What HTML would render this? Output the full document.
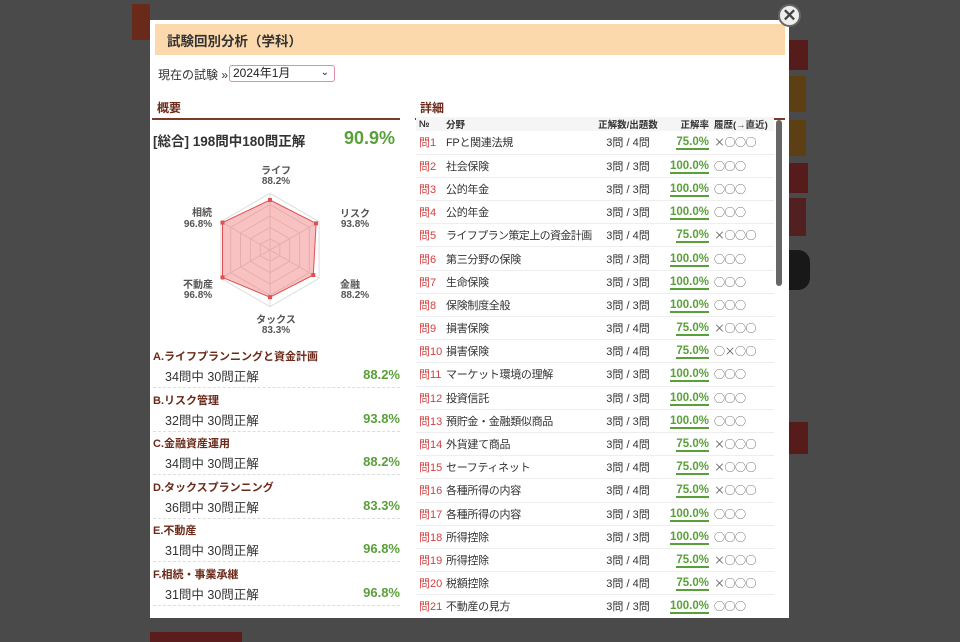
<!DOCTYPE html>
<html><head><meta charset="utf-8"><style>
*{margin:0;padding:0;box-sizing:border-box}
body{width:960px;height:640px;background:#4a4a4a;position:relative;overflow:hidden;font-family:"Liberation Sans","Noto Sans CJK JP",sans-serif;color:#333}
.b{position:absolute}
.modal{position:absolute;left:150px;top:20px;width:639px;height:598px;background:#fff}
.hdr{position:absolute;left:5px;top:4px;width:630px;height:31px;background:#fcd9ac;font-size:13.5px;font-weight:bold;color:#333;padding:6px 0 0 12px}
.sel{position:absolute;left:79px;top:45px;width:106px;height:17px;border:1.5px solid #e08aae;border-radius:3px;font-size:12px;line-height:14px;padding:0 0 0 3px;color:#222}
.h2{position:absolute;font-size:12px;font-weight:bold;color:#6b2a1a;border-bottom:2px solid #7a3a2a;padding:0 0 2px 5px}
table{border-collapse:collapse;font-size:11px;table-layout:fixed}
td{height:23.2px;border-bottom:1px solid #eee;white-space:nowrap;overflow:visible}
tr.hd td{height:14px;font-size:9.5px;font-weight:bold;background:#f5f5f5;border-bottom:none}
.n{color:#d04040;padding-left:3px}
.f{letter-spacing:-0.3px}
.c{text-align:center}
.r{text-align:right;color:#5aa03a;font-weight:bold;font-size:11.5px}
.r span{border-bottom:2px solid #5aa03a}
.h{padding-left:5px;font-size:11px;font-family:"Noto Sans CJK JP",sans-serif;letter-spacing:-0.5px;color:#555}
.cat{position:absolute;left:3px;width:247px;font-size:11px}
.cat .t{font-weight:bold;color:#6b2a1a;height:18px}
.cat .v{height:22px;border-bottom:1px dashed #ddd;padding-left:12px;font-size:12.5px;position:relative}
.cat .v b{position:absolute;right:0;top:1px;color:#5aa03a;font-weight:bold;font-size:13px}
</style></head><body>
<div class="b" style="left:132px;top:4px;width:18px;height:36px;background:#6a2a1a"></div>
<div class="b" style="left:788px;top:40px;width:20px;height:30px;background:#561c1c"></div>
<div class="b" style="left:788px;top:76px;width:18px;height:36px;background:#5c4014"></div>
<div class="b" style="left:788px;top:120px;width:18px;height:36px;background:#5c4014"></div>
<div class="b" style="left:788px;top:163px;width:20px;height:30px;background:#561c1c"></div>
<div class="b" style="left:788px;top:198px;width:18px;height:38px;background:#522020"></div>
<div class="b" style="left:788px;top:250px;width:22px;height:40px;background:#181818;border-radius:0 12px 12px 0"></div>
<div class="b" style="left:788px;top:422px;width:20px;height:32px;background:#561c1c"></div>
<div class="b" style="left:150px;top:632px;width:92px;height:10px;background:#5a1c1c"></div>
<div class="modal">
<div class="hdr">試験回別分析（学科）</div>
<div class="b" style="left:8px;top:46px;font-size:12px">現在の試験 »</div>
<div class="sel">2024年1月<span style="position:absolute;right:5px;top:0;font-size:10px">⌄</span></div>
<div class="h2" style="left:2px;top:79px;width:248px">概要</div>
<div class="h2" style="left:265px;top:79px;width:370px">詳細</div>
<div class="b" style="left:3px;top:110px;font-size:13.5px;font-weight:bold;color:#333">[総合] 198問中180問正解</div>
<div class="b" style="left:194px;top:108px;font-size:18px;font-weight:bold;color:#5aa03a">90.9%</div>
<svg class="b" style="left:0;top:140px" width="250" height="190" viewBox="150 160 250 190" font-family="Liberation Sans,Noto Sans CJK JP,sans-serif">
<g fill="none" stroke="#ddd" stroke-width="1">
<polygon points="270,193.3 319.1,221.7 319.1,278.3 270,306.7 220.9,278.3 220.9,221.7"/>
<polygon points="270,204.6 309.3,227.3 309.3,272.7 270,295.4 230.7,272.7 230.7,227.3"/>
<polygon points="270,216 299.5,233 299.5,267 270,284 240.5,267 240.5,233"/>
<polygon points="270,227.3 289.6,238.7 289.6,261.3 270,272.7 250.4,261.3 250.4,238.7"/>
<polygon points="270,238.7 279.8,244.3 279.8,255.7 270,261.3 260.2,255.7 260.2,244.3"/>
<path d="M270,193.3V306.7M220.9,221.7L319.1,278.3M319.1,221.7L220.9,278.3"/>
</g>
<polygon points="270,200 316.1,223.4 313.3,275 270,297.2 222.5,277.4 222.5,222.6" fill="rgba(240,110,110,0.42)" stroke="#e05050" stroke-width="1"/>
<g fill="#e05050"><rect x="268" y="198" width="4" height="4"/><rect x="314" y="221.4" width="4" height="4"/><rect x="311.3" y="273" width="4" height="4"/><rect x="268" y="295.2" width="4" height="4"/><rect x="220.5" y="275.4" width="4" height="4"/><rect x="220.5" y="220.6" width="4" height="4"/></g>
<g font-size="10" fill="#555" text-anchor="middle" font-weight="bold">
<text x="276" y="174">ライフ</text><text x="276" y="184">88.2%</text>
<text x="355" y="217">リスク</text><text x="355" y="227">93.8%</text>
<text x="350" y="288">金融</text><text x="355" y="298">88.2%</text>
<text x="276" y="323">タックス</text><text x="276" y="333">83.3%</text>
<text x="198" y="288">不動産</text><text x="198" y="298">96.8%</text>
<text x="202" y="216">相続</text><text x="198" y="227">96.8%</text>
</g></svg>
<div class="cat" style="top:328px"><div class="t">A.ライフプランニングと資金計画</div><div class="v">34問中 30問正解<b>88.2%</b></div></div>
<div class="cat" style="top:372px"><div class="t">B.リスク管理</div><div class="v">32問中 30問正解<b>93.8%</b></div></div>
<div class="cat" style="top:415px"><div class="t">C.金融資産運用</div><div class="v">34問中 30問正解<b>88.2%</b></div></div>
<div class="cat" style="top:459px"><div class="t">D.タックスプランニング</div><div class="v">36問中 30問正解<b>83.3%</b></div></div>
<div class="cat" style="top:502px"><div class="t">E.不動産</div><div class="v">31問中 30問正解<b>96.8%</b></div></div>
<div class="cat" style="top:546px"><div class="t">F.相続・事業承継</div><div class="v">31問中 30問正解<b>96.8%</b></div></div>
<div class="b" style="left:266px;top:97px;width:358px;height:500px;overflow:hidden">
<table style="width:358px">
<colgroup><col style="width:30px"><col style="width:144px"><col style="width:76px"><col style="width:43px"><col style="width:65px"></colgroup>
<tr class="hd"><td style="padding-left:3px">№</td><td>分野</td><td class="c">正解数/出題数</td><td style="text-align:right">正解率</td><td style="padding-left:5px">履歴(→直近)</td></tr>
<tr><td class="n">問1</td><td class="f">FPと関連法規</td><td class="c">3問 / 4問</td><td class="r"><span>75.0%</span></td><td class="h">×○○○</td></tr>
<tr><td class="n">問2</td><td class="f">社会保険</td><td class="c">3問 / 3問</td><td class="r"><span>100.0%</span></td><td class="h">○○○</td></tr>
<tr><td class="n">問3</td><td class="f">公的年金</td><td class="c">3問 / 3問</td><td class="r"><span>100.0%</span></td><td class="h">○○○</td></tr>
<tr><td class="n">問4</td><td class="f">公的年金</td><td class="c">3問 / 3問</td><td class="r"><span>100.0%</span></td><td class="h">○○○</td></tr>
<tr><td class="n">問5</td><td class="f" style="letter-spacing:-0.6px">ライフプラン策定上の資金計画</td><td class="c">3問 / 4問</td><td class="r"><span>75.0%</span></td><td class="h">×○○○</td></tr>
<tr><td class="n">問6</td><td class="f">第三分野の保険</td><td class="c">3問 / 3問</td><td class="r"><span>100.0%</span></td><td class="h">○○○</td></tr>
<tr><td class="n">問7</td><td class="f">生命保険</td><td class="c">3問 / 3問</td><td class="r"><span>100.0%</span></td><td class="h">○○○</td></tr>
<tr><td class="n">問8</td><td class="f">保険制度全般</td><td class="c">3問 / 3問</td><td class="r"><span>100.0%</span></td><td class="h">○○○</td></tr>
<tr><td class="n">問9</td><td class="f">損害保険</td><td class="c">3問 / 4問</td><td class="r"><span>75.0%</span></td><td class="h">×○○○</td></tr>
<tr><td class="n">問10</td><td class="f">損害保険</td><td class="c">3問 / 4問</td><td class="r"><span>75.0%</span></td><td class="h">○×○○</td></tr>
<tr><td class="n">問11</td><td class="f">マーケット環境の理解</td><td class="c">3問 / 3問</td><td class="r"><span>100.0%</span></td><td class="h">○○○</td></tr>
<tr><td class="n">問12</td><td class="f">投資信託</td><td class="c">3問 / 3問</td><td class="r"><span>100.0%</span></td><td class="h">○○○</td></tr>
<tr><td class="n">問13</td><td class="f">預貯金・金融類似商品</td><td class="c">3問 / 3問</td><td class="r"><span>100.0%</span></td><td class="h">○○○</td></tr>
<tr><td class="n">問14</td><td class="f">外貨建て商品</td><td class="c">3問 / 4問</td><td class="r"><span>75.0%</span></td><td class="h">×○○○</td></tr>
<tr><td class="n">問15</td><td class="f">セーフティネット</td><td class="c">3問 / 4問</td><td class="r"><span>75.0%</span></td><td class="h">×○○○</td></tr>
<tr><td class="n">問16</td><td class="f">各種所得の内容</td><td class="c">3問 / 4問</td><td class="r"><span>75.0%</span></td><td class="h">×○○○</td></tr>
<tr><td class="n">問17</td><td class="f">各種所得の内容</td><td class="c">3問 / 3問</td><td class="r"><span>100.0%</span></td><td class="h">○○○</td></tr>
<tr><td class="n">問18</td><td class="f">所得控除</td><td class="c">3問 / 3問</td><td class="r"><span>100.0%</span></td><td class="h">○○○</td></tr>
<tr><td class="n">問19</td><td class="f">所得控除</td><td class="c">3問 / 4問</td><td class="r"><span>75.0%</span></td><td class="h">×○○○</td></tr>
<tr><td class="n">問20</td><td class="f">税額控除</td><td class="c">3問 / 4問</td><td class="r"><span>75.0%</span></td><td class="h">×○○○</td></tr>
<tr><td class="n">問21</td><td class="f">不動産の見方</td><td class="c">3問 / 3問</td><td class="r"><span>100.0%</span></td><td class="h">○○○</td></tr>
</table></div>
<div class="b" style="left:626px;top:100px;width:6px;height:166px;background:#666;border-radius:3px"></div>
</div>
<div class="b" style="left:778px;top:4px;width:23px;height:23px;border-radius:50%;background:#eee;border:2px solid #666;color:#444;font-size:17px;font-weight:bold;text-align:center;line-height:19px">✕</div>
</body></html>
